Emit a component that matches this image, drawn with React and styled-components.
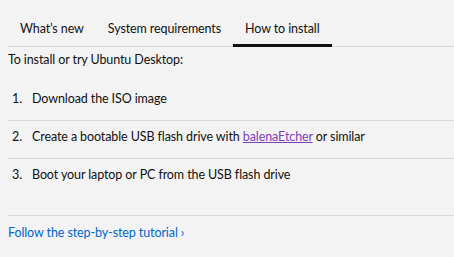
import React from 'react';
import styled, { createGlobalStyle } from 'styled-components';

const COLORS = {
  bg: '#f3f3f3',
  text: '#111111',
  rule: '#d9d9d9',
  link: '#0066cc',
  visited: '#7d42b8',
};

const GlobalStyle = createGlobalStyle`
  html, body {
    margin: 0;
    background: ${COLORS.bg};
  }
  body {
    font-family: Lato, "Noto Sans", "Liberation Sans", sans-serif;
    font-size: 12.5px;
    letter-spacing: -0.1px;
    line-height: 20px;
    color: ${COLORS.text};
  }
`;

const tabs = ['What’s new', 'System requirements', 'How to install'];

const App = () => {
  const active = 2;

  const steps = [
    { id: 1, content: 'Download the ISO image' },
    {
      id: 2,
      content: (
        <>
          Create a bootable USB flash drive with <Visited href="#">balenaEtcher</Visited> or similar
        </>
      ),
    },
    { id: 3, content: 'Boot your laptop or PC from the USB flash drive' },
  ];

  return (
    <Page>
      <GlobalStyle />
      <TabList role="tablist">
        {tabs.map((label, i) => (
          <Tab key={label} role="tab" $active={i === active} aria-selected={i === active}>
            {label}
          </Tab>
        ))}
      </TabList>
      <Intro>To install or try Ubuntu Desktop:</Intro>
      <Steps>
        {steps.map((step) => (
          <Step key={step.id}>
            <StepNumber>{step.id}.</StepNumber>
            <span>{step.content}</span>
          </Step>
        ))}
      </Steps>
      <Footer>
        <TutorialLink href="#">Follow the step-by-step tutorial&nbsp;›</TutorialLink>
      </Footer>
    </Page>
  );
};

const Page = styled.div`
  padding-left: 8px;
`;

const TabList = styled.div`
  display: flex;
  border-bottom: 1px solid ${COLORS.rule};
`;

const Tab = styled.div`
  position: relative;
  padding: 19px 12px 7px;
  cursor: pointer;
  &::after {
    content: '';
    position: absolute;
    left: 0;
    right: 0;
    bottom: -1px;
    height: 3px;
    background: ${(p) => (p.$active ? COLORS.text : 'transparent')};
  }
`;

const Intro = styled.p`
  margin: 3px 0 0;
`;

const Steps = styled.ol`
  list-style: none;
  margin: 13px 0 0;
  padding: 0;
`;

const Step = styled.li`
  display: flex;
  padding: 6px 0 11px;
  & + & {
    border-top: 1px solid ${COLORS.rule};
  }
`;

const StepNumber = styled.span`
  box-sizing: border-box;
  width: 24px;
  padding-left: 4px;
  flex-shrink: 0;
`;

const Visited = styled.a`
  color: ${COLORS.visited};
  text-decoration: underline;
`;

const Footer = styled.div`
  margin-top: 19px;
  border-top: 1px solid ${COLORS.rule};
  padding-top: 7px;
`;

const TutorialLink = styled.a`
  color: ${COLORS.link};
  text-decoration: none;
`;

export default App;
